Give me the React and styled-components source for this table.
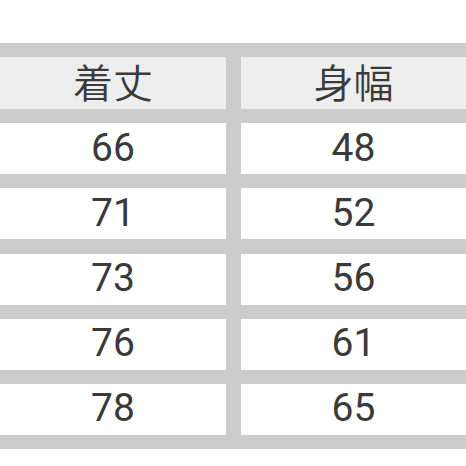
import React from "react";
import styled, { createGlobalStyle } from "styled-components";

const Global = createGlobalStyle`
  html, body { margin: 0; padding: 0; background: #ffffff; }
  body { font-family: Roboto, "Noto Sans CJK JP", sans-serif; }
`;

const Page = styled.div`
  width: 466px;
  height: 466px;
  padding-top: 43px;
  box-sizing: border-box;
  background: #ffffff;
  overflow: hidden;
`;

const Table = styled.div`
  display: grid;
  grid-template-columns: 226px 225px;
  grid-template-rows: 52px repeat(5, 51px);
  column-gap: 15px;
  row-gap: 14.2px;
  padding: 14px 0 14px 0;
  background: #cccccc;
`;

const Cell = styled.div`
  display: flex;
  align-items: center;
  justify-content: center;
  background: ${(p) => (p.$head ? "#eeeeee" : "#ffffff")};
  color: #3a3a3a;
  font-family: ${(p) => (p.$head ? `"Noto Sans CJK JP", sans-serif` : `Roboto, sans-serif`)};
  font-size: ${(p) => (p.$head ? "40px" : "39px")};
  font-weight: ${(p) => (p.$head ? 350 : 400)};
  line-height: 1;
  padding-bottom: ${(p) => (p.$head ? "4px" : "1px")};
  box-sizing: border-box;
`;

const rows = [
  ["66", "48"],
  ["71", "52"],
  ["73", "56"],
  ["76", "61"],
  ["78", "65"],
];

export default function App() {
  return (
    <Page>
      <Global />
      <Table>
        <Cell $head>着丈</Cell>
        <Cell $head>身幅</Cell>
        {rows.map(([a, b]) => (
          <React.Fragment key={a}>
            <Cell>{a}</Cell>
            <Cell>{b}</Cell>
          </React.Fragment>
        ))}
      </Table>
    </Page>
  );
}
